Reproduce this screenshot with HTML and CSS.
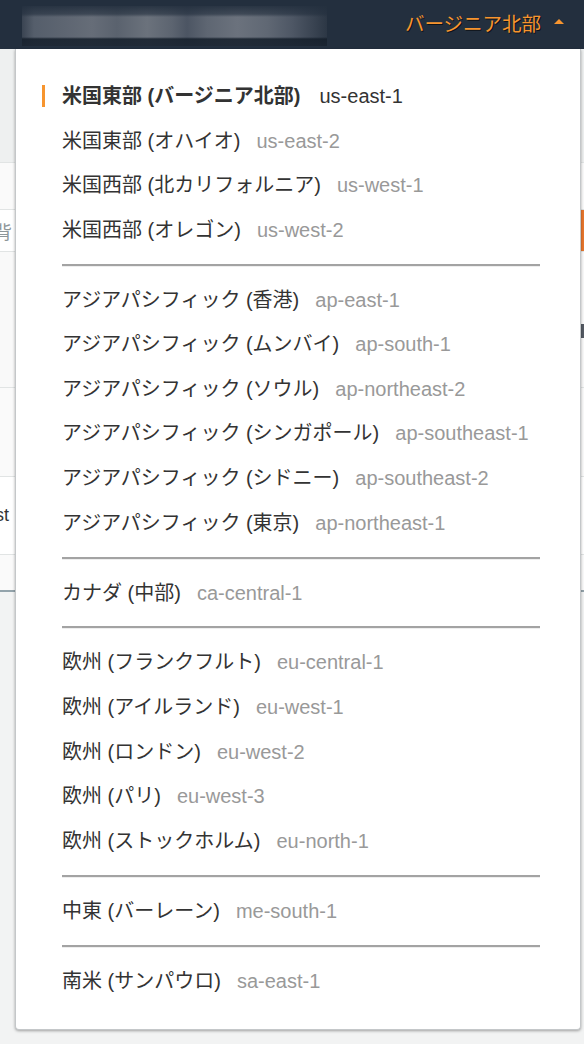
FILE: index.html
```html
<!DOCTYPE html>
<html lang="ja">
<head>
<meta charset="utf-8">
<title>Region selector</title>
<link rel="stylesheet" href="styles.css">
</head>
<body>
<header class="topbar">
  <div class="blurred"></div>
  <div class="region-toggle">
    <span class="region-current">バージニア北部</span>
    <span class="caret"></span>
  </div>
</header>

<main class="page">
  <div class="bg-row bg-a"></div>
  <div class="bg-row bg-b"></div>
  <div class="bg-row bg-c"><span class="bg-text muted">背</span></div>
  <div class="bg-row bg-d"><span class="bg-icon"></span></div>
  <div class="bg-row bg-e"></div>
  <div class="bg-row bg-f"><span class="bg-text">st</span></div>
  <div class="bg-row bg-g"></div>
</main>

<div class="menu">
  <ul class="group">
    <li class="item selected"><span class="name">米国東部 (バージニア北部)</span><span class="code">us-east-1</span></li>
    <li class="item"><span class="name">米国東部 (オハイオ)</span><span class="code">us-east-2</span></li>
    <li class="item"><span class="name">米国西部 (北カリフォルニア)</span><span class="code">us-west-1</span></li>
    <li class="item"><span class="name">米国西部 (オレゴン)</span><span class="code">us-west-2</span></li>
  </ul>
  <div class="sep"></div>
  <ul class="group">
    <li class="item"><span class="name">アジアパシフィック (香港)</span><span class="code">ap-east-1</span></li>
    <li class="item"><span class="name">アジアパシフィック (ムンバイ)</span><span class="code">ap-south-1</span></li>
    <li class="item"><span class="name">アジアパシフィック (ソウル)</span><span class="code">ap-northeast-2</span></li>
    <li class="item"><span class="name">アジアパシフィック (シンガポール)</span><span class="code">ap-southeast-1</span></li>
    <li class="item"><span class="name">アジアパシフィック (シドニー)</span><span class="code">ap-southeast-2</span></li>
    <li class="item"><span class="name">アジアパシフィック (東京)</span><span class="code">ap-northeast-1</span></li>
  </ul>
  <div class="sep"></div>
  <ul class="group">
    <li class="item"><span class="name">カナダ (中部)</span><span class="code">ca-central-1</span></li>
  </ul>
  <div class="sep"></div>
  <ul class="group">
    <li class="item"><span class="name">欧州 (フランクフルト)</span><span class="code">eu-central-1</span></li>
    <li class="item"><span class="name">欧州 (アイルランド)</span><span class="code">eu-west-1</span></li>
    <li class="item"><span class="name">欧州 (ロンドン)</span><span class="code">eu-west-2</span></li>
    <li class="item"><span class="name">欧州 (パリ)</span><span class="code">eu-west-3</span></li>
    <li class="item"><span class="name">欧州 (ストックホルム)</span><span class="code">eu-north-1</span></li>
  </ul>
  <div class="sep"></div>
  <ul class="group">
    <li class="item"><span class="name">中東 (バーレーン)</span><span class="code">me-south-1</span></li>
  </ul>
  <div class="sep"></div>
  <ul class="group">
    <li class="item"><span class="name">南米 (サンパウロ)</span><span class="code">sa-east-1</span></li>
  </ul>
</div>
</body>
</html>
```

FILE: styles.css
```css
* { box-sizing: border-box; }

html, body {
  margin: 0;
  padding: 0;
}

body {
  width: 584px;
  height: 1044px;
  overflow: hidden;
  background: #f2f3f3;
  font-family: "Liberation Sans", "Noto Sans CJK JP", sans-serif;
  color: #333;
  position: relative;
}

/* ---------- top bar ---------- */
.topbar {
  height: 49px;
  background: #232f3e;
  display: flex;
  align-items: center;
  justify-content: space-between;
  padding: 0 20px 0 22px;
}

.blurred {
  width: 305px;
  height: 40px;
  margin-top: 2px;
  background:
    linear-gradient(180deg, rgba(35,47,62,0.9) 0, rgba(35,47,62,0.6) 8px, rgba(0,0,0,0) 11px, rgba(0,0,0,0) 31px, rgba(20,30,42,0.85) 33px, rgba(25,35,48,0.9) 40px),
    linear-gradient(90deg, #3a4452 0, #555e6b 12px, #5d6571 40px, #666d78 70px, #5a626e 95px, #6b727c 125px, #5c6470 150px, #4c5563 165px, #5e6672 185px, #6b727d 215px, #606874 245px, #4e5765 270px, #3b4553 290px, #2c3745 305px);
}

.region-toggle {
  display: flex;
  align-items: center;
  gap: 13px;
  margin-top: -5px;
}

.region-current {
  font-size: 19.5px;
  color: #f7952f;
  text-shadow: 1px 1px 0 rgba(0, 0, 0, 0.6);
}

.caret {
  width: 0;
  height: 0;
  border-left: 5px solid transparent;
  border-right: 5px solid transparent;
  border-bottom: 5px solid #f7952f;
  margin-top: -1px;
}

/* ---------- background page (under the menu) ---------- */
.page {
  display: flex;
  flex-direction: column;
}

.bg-row {
  border-bottom: 1px solid #e1e4e4;
  display: flex;
  align-items: center;
  justify-content: space-between;
  overflow: hidden;
}

.bg-a { height: 114px; background: #eef0f0; }
.bg-b { height: 47px; background: #fafafa; }
.bg-c { height: 42px; background: #fff; }
.bg-d { height: 136px; background: #f9f9f9; align-items: flex-start; }
.bg-e { height: 89px; background: #fafafa; }
.bg-f { height: 78px; background: #fff; }
.bg-g { height: 37px; background: #fafafa; border-bottom: 2px solid #93a3ab; }

.bg-text {
  font-size: 18px;
  margin-left: -5px;
  color: #333;
}
.bg-text.muted { color: #8d9699; margin-left: -6px; }

.bg-c::after {
  content: "";
  width: 4px;
  height: 54px;
  background: #e8762d;
  align-self: flex-start;
  margin-top: -3px;
}

.bg-icon {
  margin-left: auto;
  margin-top: 72px;
  width: 4px;
  height: 14px;
  background: #545b64;
}

/* ---------- dropdown menu (overlay) ---------- */
.menu {
  position: absolute;
  top: 49px;
  left: 15px;
  width: 566px;
  height: 981px;
  background: #fff;
  border: 1px solid #c4c7c9;
  border-top: none;
  border-radius: 0 0 4px 4px;
  box-shadow: 0 1px 3px rgba(0, 0, 0, 0.35);
  padding: 25px 40px 26px 46px;
}

.group {
  list-style: none;
  margin: 0;
  padding: 0;
}

.item {
  height: 44.55px;
  display: flex;
  align-items: center;
  font-size: 20px;
  line-height: 24px;
  position: relative;
  white-space: nowrap;
}

.name { color: #333; }

.code {
  color: #999;
  margin-left: 16px;
}

.selected .name { font-weight: bold; }
.selected .code { color: #333; margin-left: 19px; }

.selected::before {
  content: "";
  position: absolute;
  left: -20px;
  top: 11px;
  width: 3px;
  height: 22px;
  background: #f7952f;
}

.sep {
  height: 25.4px;
  display: flex;
  align-items: center;
}

.sep::before {
  content: "";
  display: block;
  width: 100%;
  height: 2px;
  background: #a3a3a3;
  box-shadow: 0 1px 0 #eeeeee;
}
```
